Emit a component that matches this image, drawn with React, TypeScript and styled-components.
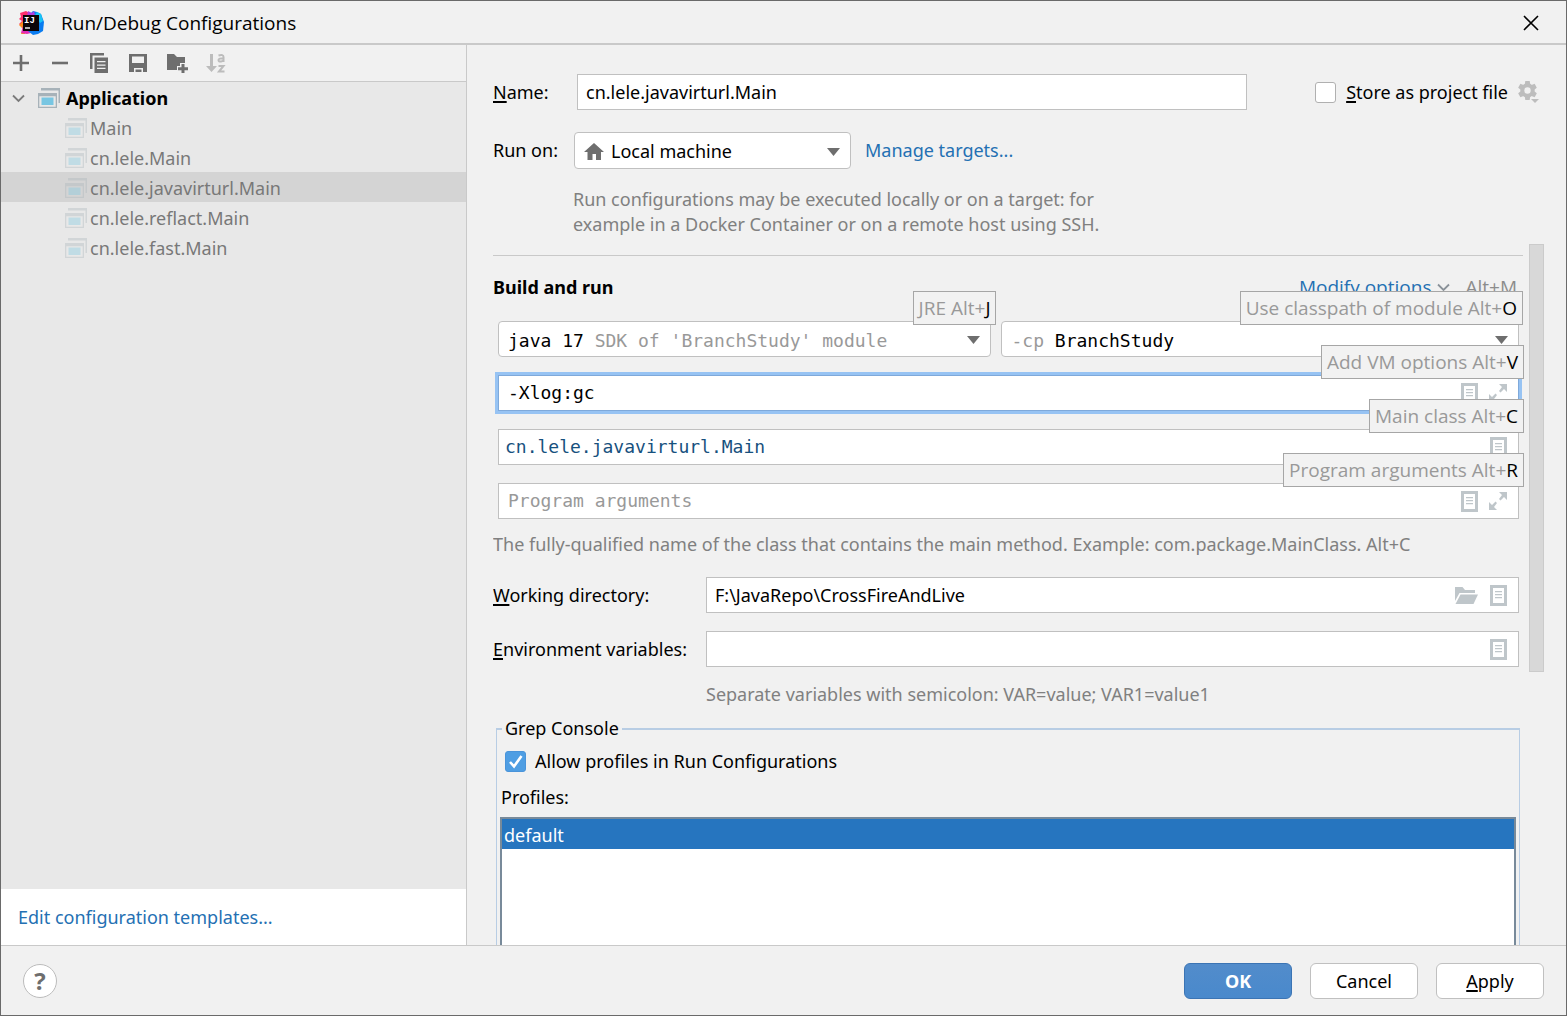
import React, { ReactNode } from 'react';
import styled, { createGlobalStyle } from 'styled-components';

const c = {
  panel: '#f1f1f1',
  tree: '#e8e8e8',
  selected: '#d4d4d4',
  line: '#c9c9c9',
  field: '#c0c0c0',
  link: '#2470b3',
  hint: '#808080',
  faint: '#999999',
  icon: '#6e6e6e',
  fieldIcon: '#bfc6ca',
};

const ui = '"Noto Sans", "Noto Sans CJK SC", sans-serif';
const mono = '"DejaVu Sans Mono", "Liberation Mono", monospace';

const GlobalStyle = createGlobalStyle`
  *, *::before, *::after { box-sizing: border-box; }
  body { margin: 0; }
  button, input, select { font: inherit; color: inherit; margin: 0; }
`;

/* ---------- window frame ---------- */

const Dialog = styled.div`
  display: flex;
  flex-direction: column;
  height: 100vh;
  border: 1px solid #6a6a6a;
  background: ${c.panel};
  color: #000;
  font: 18px/25px ${ui};
  overflow: hidden;
`;

const TitleBar = styled.header`
  display: flex;
  align-items: center;
  flex: none;
  height: 44px;
  padding: 2px 27px 0 18px;
  border-bottom: 2px solid ${c.line};
`;

const Title = styled.h1`
  flex: 1;
  margin: 0 0 0 17px;
  font: 400 19px/25px "Open Sans", ${ui};
`;

const IconButton = styled.button<{ $w?: number }>`
  display: flex;
  align-items: center;
  justify-content: center;
  flex: none;
  width: ${p => p.$w ?? 22}px;
  height: 24px;
  padding: 0;
  border: 0;
  background: none;
  color: ${c.icon};

  &:disabled { color: #bcbcbc; }
`;

const Body = styled.div`
  display: flex;
  flex: 1;
  min-height: 0;
`;

/* ---------- configurations sidebar ---------- */

const Sidebar = styled.aside`
  display: flex;
  flex-direction: column;
  flex: none;
  width: 466px;
  border-right: 1px solid ${c.line};
`;

const Toolbar = styled.div`
  display: flex;
  align-items: center;
  gap: 17px;
  height: 37px;
  padding: 0 9px;
  border-bottom: 1px solid ${c.line};
`;

const Tree = styled.ul`
  flex: 1;
  margin: 0;
  padding: 0;
  background: ${c.tree};
  list-style: none;
`;

const Group = styled.ul`
  margin: 0;
  padding: 0;
  list-style: none;
`;

const RootRow = styled.div`
  display: flex;
  align-items: center;
  height: 30px;
  padding: 2px 0 0 11px;
  font-weight: 700;

  svg:first-child { color: #7a7a7a; }
  svg + svg { margin: 0 6px 0 13px; }
`;

const ConfigRow = styled.li<{ $selected?: boolean }>`
  display: flex;
  align-items: center;
  gap: 3px;
  height: 30px;
  padding: 2px 0 0 64px;
  background: ${p => (p.$selected ? c.selected : 'transparent')};
  color: #787878;

  svg { opacity: 0.35; }
`;

const SidebarFooter = styled.div`
  display: flex;
  align-items: center;
  height: 56px;
  padding-left: 17px;
  background: #fff;
`;

const Link = styled.a`
  color: ${c.link};
  text-decoration: none;
`;

/* ---------- editor ---------- */

const Editor = styled.main`
  display: flex;
  flex-direction: column;
  flex: 1;
  min-width: 0;
  padding: 29px 0 0 26px;
`;

const General = styled.div`
  display: flex;
  flex-direction: column;
  gap: 22px;
  padding-right: 26px;
`;

const Row = styled.div`
  display: flex;
  align-items: center;
`;

const FieldLabel = styled.label<{ $w: number }>`
  flex: none;
  width: ${p => p.$w}px;
`;

const Mnemonic = styled.span`
  text-decoration: underline;
  text-decoration-thickness: 2px;
  text-underline-offset: 2px;
`;

const Field = styled.div<{ $focused?: boolean; $pad?: number }>`
  position: relative;
  display: flex;
  align-items: center;
  flex: 1;
  min-width: 0;
  gap: 12px;
  height: 36px;
  padding: 0 11px 0 ${p => p.$pad ?? 8}px;
  border: 1px solid ${p => (p.$focused ? '#7fa9da' : c.field)};
  box-shadow: ${p => (p.$focused ? '0 0 0 3px #97c3f3' : 'none')};
  background: #fff;
  color: ${c.fieldIcon};
`;

const TextInput = styled.input<{ $mono?: boolean; $color?: string }>`
  flex: 1;
  min-width: 0;
  height: 100%;
  padding: 0 0 1px;
  border: 0;
  outline: 0;
  background: none;
  color: ${p => p.$color ?? '#000'};
  font-family: ${p => (p.$mono ? mono : 'inherit')};

  &::placeholder { color: ${c.faint}; opacity: 1; }
`;

const Combo = styled.div<{ $mono?: boolean }>`
  position: relative;
  display: flex;
  align-items: center;
  height: ${p => (p.$mono ? 36 : 37)}px;
  padding: 2px 10px 0 9px;
  border: 1px solid ${c.field};
  border-radius: 4px;
  background: #fff;
  color: ${c.icon};
  font-family: ${p => (p.$mono ? mono : 'inherit')};
`;

const TargetCombo = styled(Combo)`
  width: 277px;
  gap: 7px;
`;

const Select = styled.select<{ $chars?: number }>`
  flex: ${p => (p.$chars ? 'none' : 1)};
  width: ${p => (p.$chars ? `${p.$chars}ch` : 'auto')};
  min-width: 0;
  height: 100%;
  padding: 0;
  border: 0;
  outline: 0;
  background: none;
  color: #000;
  appearance: none;
`;

const Dim = styled.span<{ $grow?: boolean }>`
  flex: ${p => (p.$grow ? 1 : 'none')};
  color: ${c.faint};
  white-space: pre;
`;

const StoreOption = styled.div`
  display: flex;
  align-items: center;
  gap: 10px;
  margin-left: 68px;
`;

const Check = styled.input`
  flex: none;
  width: 21px;
  height: 21px;
  border: 1px solid #b0b0b0;
  border-radius: 3px;
  background: #fff;
  appearance: none;

  &:checked {
    border-color: #4a94da;
    background: #4f9ee3 url("data:image/svg+xml,%3Csvg xmlns='http://www.w3.org/2000/svg' viewBox='0 0 19 19'%3E%3Cpath d='M4 10l4 4.4L15.5 4' fill='none' stroke='white' stroke-width='2.6'/%3E%3C/svg%3E") center / 19px 19px no-repeat;
  }
`;

const ManageLink = styled(Link)`
  margin-left: 14px;
`;

const TargetHint = styled.p`
  max-width: 560px;
  margin: 18px 0 7px 80px;
  color: ${c.hint};
`;

const ScrollArea = styled.div`
  display: flex;
  flex: 1;
  min-height: 0;
  overflow: hidden;
`;

const Settings = styled.div`
  flex: 1;
  min-width: 0;
  padding-top: 11px;
`;

const ScrollTrack = styled.div`
  flex: none;
  width: 43px;
  padding-left: 6px;
`;

const ScrollThumb = styled.div`
  width: 15px;
  height: 61%;
  border: 1px solid #cbcbcb;
  background: #d8d8d8;
`;

const SectionHead = styled.div`
  display: flex;
  align-items: center;
  padding: 19px 6px 0 0;
  border-top: 1px solid ${c.line};
`;

const SectionTitle = styled.h2`
  flex: 1;
  margin: 0;
  font: inherit;
  font-weight: 700;
`;

const MenuButton = styled.button`
  display: flex;
  align-items: center;
  gap: 6px;
  padding: 0;
  border: 0;
  background: none;
  color: ${c.link};
  font: 19px/25px "Open Sans", ${ui};

  svg { color: #8a9299; }
`;

const Shortcut = styled.span`
  margin-left: 15px;
  color: #8c8c8c;
  font: 19px/25px "Open Sans", ${ui};
`;

const Commands = styled.div`
  display: grid;
  gap: 18px;
  margin: 21px 4px 0 5px;
`;

const ComboPair = styled.div`
  display: grid;
  grid-template-columns: 493fr 517fr;
  gap: 10px;
`;

const Tip = styled.span<{ $out: number }>`
  position: absolute;
  z-index: 1;
  top: -31px;
  right: -${p => p.$out}px;
  padding: 4px 5px 3px 5px;
  border: 1px solid #a6a6a6;
  background: #f2f2f2;
  color: ${c.faint};
  font: 19px/25px "Open Sans", ${ui};
  white-space: nowrap;

  b { color: #000; font-weight: 400; }
`;

const Hint = styled.p<{ $top: number; $left?: number }>`
  margin: ${p => p.$top}px 0 0 ${p => p.$left ?? 0}px;
  color: ${c.hint};
`;

const Environment = styled.div`
  display: grid;
  gap: 18px;
  margin: 20px 4px 0 0;
`;

const GrepConsole = styled.fieldset`
  min-width: 0;
  margin: 9px 3px 0;
  padding: 8px 3px 0;
  border: 1px solid #b8cde4;
  border-top-width: 2px;
`;

const Legend = styled.legend`
  margin-left: 2px;
  padding: 0 3px;
`;

const ProfileOption = styled.div`
  display: flex;
  align-items: center;
  gap: 9px;
  padding-left: 5px;
`;

const ProfilesLabel = styled.div`
  margin: 11px 0 7px 1px;
`;

const ProfileList = styled.ul`
  height: 240px;
  margin: 0;
  padding: 0;
  border: 2px solid #788a9a;
  background: #fff;
  list-style: none;
`;

const Profile = styled.li`
  height: 30px;
  padding: 4px 2px 0;
  background: #2675bf;
  color: #fff;
`;

/* ---------- footer ---------- */

const Footer = styled.footer`
  display: flex;
  align-items: center;
  gap: 18px;
  flex: none;
  height: 70px;
  padding: 0 22px;
  border-top: 1px solid ${c.line};
`;

const HelpButton = styled.button`
  width: 34px;
  height: 34px;
  margin-right: auto;
  padding: 0;
  border: 1px solid #bcbcbc;
  border-radius: 50%;
  background: #fff;
  color: ${c.icon};
  font: 700 24px/30px "Open Sans", ${ui};
`;

const PushButton = styled.button<{ $primary?: boolean }>`
  width: 108px;
  height: 36px;
  padding: 2px 0 0;
  border: 1px solid ${p => (p.$primary ? '#3b74b4' : c.field)};
  border-radius: 6px;
  background: ${p => (p.$primary ? 'linear-gradient(#528ccb, #4989cc)' : '#fff')};
  color: ${p => (p.$primary ? '#fff' : '#000')};
  font-weight: ${p => (p.$primary ? 700 : 400)};
`;

/* ---------- icons ---------- */

const Logo = () => (
  <svg width="25" height="24" viewBox="0 0 25 24" aria-hidden="true">
    <path d="M1 2l6-2 5 3-2 10-6 3-4-3 3-3-3-2 2-2z" fill="#fe2e6c" />
    <path d="M0 14l5-5 3 6-2 8H2l2-5z" fill="#fc8a1c" />
    <path d="M4 15l4 1 4 6-4 1-6-1z" fill="#e32bb6" />
    <path d="M11 3l3-3 4 1 4 2 3 8-1 9-5 3-5 1-5-4z" fill="#0a7cf0" />
    <path d="M18 1l4 2 2 7-3 2-5-8z" fill="#18c4f4" />
    <path d="M9 0l4 2 2-2 1 5H8z" fill="#b23ce0" />
    <rect x="4" y="4" width="16" height="16" fill="#0b0508" />
    <text x="5" y="12" fill="#fff" fontFamily="Liberation Mono, monospace" fontSize="9" fontWeight="700">IJ</text>
    <path d="M6 17h5" stroke="#fff" strokeWidth="1.4" />
  </svg>
);

const CloseIcon = () => (
  <svg width="16" height="16" viewBox="0 0 16 16" fill="none" stroke="#000" strokeWidth="1.6">
    <path d="M1 1l14 14M15 1L1 15" />
  </svg>
);

const Stroke = ({ d }: { d: string }) => (
  <svg width="16" height="16" viewBox="0 0 16 16" fill="none" stroke="currentColor" strokeWidth="2.6">
    <path d={d} />
  </svg>
);

const CopyIcon = () => (
  <svg width="18" height="20" viewBox="0 0 18 20" fill="currentColor">
    <path d="M0 0h14v2.5H2.500V16H0z" />
    <path fillRule="evenodd" d="M4.500 4.500H18V20H4.500zm2.500 3.500v1.300h8.500V8zm0 3.400v1.300h8.500v-1.300zm0 3.400v1.300h8.500v-1.300z" />
  </svg>
);

const SaveIcon = () => (
  <svg width="18" height="18" viewBox="0 0 18 18" fill="currentColor">
    <path fillRule="evenodd" d="M0 0h18v18h-4v-4H5v4H0zM3 2.500V9h12V2.500z" />
    <path d="M6.500 15.500h6V18h-6z" />
  </svg>
);

const FolderPlusIcon = () => (
  <svg width="22" height="20" viewBox="0 0 22 20" fill="currentColor">
    <path d="M1 1h7l3 3h8v6h-5v3h-3v4H1z" />
    <path d="M15.500 11h3v3.200H22v3h-3.500V20h-3v-2.800H12v-3h3.500z" />
  </svg>
);

const SortIcon = () => (
  <svg width="20" height="21" viewBox="0 0 20 21" fill="currentColor">
    <path d="M4 1h3v12h4l-5.500 6L0 13h4z" />
    <path d="M12.500 2.500q5-1.500 5 1.500v5M17.500 5.500q-5-.5-5 1.500t2.500 1.500 2.500-1.500M12.500 13h5l-4.500 5.500h5.500" fill="none" stroke="currentColor" strokeWidth="2" />
  </svg>
);

const Chevron = ({ w }: { w: number }) => (
  <svg width={w} height="9" viewBox="0 0 13 9" fill="none" stroke="currentColor" strokeWidth="1.8">
    <path d="M1 1.500l5.500 5.500L12 1.500" />
  </svg>
);

const AppIcon = () => (
  <svg width="22" height="20" viewBox="0 0 22 20" fill="#a7b2b9">
    <path d="M3 0h19v15h-1.500V2.500H3z" />
    <path fillRule="evenodd" d="M0 5h19v15H0zm1.300 3.200v10.500h16.400V8.200z" />
    <path d="M3.500 9.500h12v7.500h-12z" fill="#78c6e2" />
  </svg>
);

const HomeIcon = () => (
  <svg width="20" height="17" viewBox="0 0 20 17" fill="currentColor">
    <path d="M10 0l10 9h-3v8h-5v-6H8.500v6H3.500V9H0z" />
  </svg>
);

const Arrow = () => (
  <svg width="13" height="8" viewBox="0 0 13 8" fill="currentColor">
    <path d="M0 0h13L6.500 8z" />
  </svg>
);

const GearIcon = () => (
  <svg width="22" height="22" viewBox="0 0 22 22" fill="#bdbdbd">
    <circle cx="9.500" cy="9.500" r="5.200" fill="none" stroke="#bdbdbd" strokeWidth="4" />
    {[0, 60, 120, 180, 240, 300].map(a => (
      <path key={a} d="M7.300 0h4.400l.6 4H6.700z" transform={`rotate(${a} 9.500 9.500)`} />
    ))}
    <path d="M13 18h8l-4 4z" />
  </svg>
);

const DocIcon = () => (
  <svg width="17" height="21" viewBox="0 0 17 21" fill="currentColor">
    <path fillRule="evenodd" d="M0 0h17v21H0zm3 3v15h11V3z" />
    <path d="M5 6h7v1.300H5zM5 9h7v1.300H5zM5 12h7v1.300H5z" />
  </svg>
);

const ExpandIcon = () => (
  <svg width="18" height="18" viewBox="0 0 18 18" fill="currentColor">
    <path d="M10 0h8v8l-3-3-3.500 3.500-1.500-1.500L13 3zM0 18v-8l3 3 3.500-3.500L8 11l-3 4 3 3z" />
  </svg>
);

const FolderIcon = () => (
  <svg width="23" height="17" viewBox="0 0 23 17" fill="currentColor">
    <path d="M0 0h7.500l2.500 3h10v3H4.500L0 14z" />
    <path d="M5.500 7.500H23L18.500 17H.5z" />
  </svg>
);

/* ---------- parts ---------- */

const configurations = ['Main', 'cn.lele.Main', 'cn.lele.javavirturl.Main', 'cn.lele.reflact.Main', 'cn.lele.fast.Main'];
const selectedConfiguration = 'cn.lele.javavirturl.Main';

const KeyTip = ({ text, letter, out = 6 }: { text: string; letter: string; out?: number }) => (
  <Tip $out={out}>{text} Alt+<b>{letter}</b></Tip>
);

const FieldButton = ({ label, w = 18, children }: { label: string; w?: number; children: ReactNode }) => (
  <IconButton type="button" aria-label={label} $w={w}>{children}</IconButton>
);

const FieldIcons = styled.div`
  display: flex;
  gap: 11px;

  button { color: ${c.fieldIcon}; }
`;

export default function App() {
  return (
    <Dialog>
      <GlobalStyle />
      <TitleBar>
        <Logo />
        <Title>Run/Debug Configurations</Title>
        <IconButton type="button" aria-label="Close" $w={16}><CloseIcon /></IconButton>
      </TitleBar>

      <Body>
        <Sidebar>
          <Toolbar>
            <IconButton type="button" aria-label="Add"><Stroke d="M8 0v16M0 8h16" /></IconButton>
            <IconButton type="button" aria-label="Remove"><Stroke d="M0 8h16" /></IconButton>
            <IconButton type="button" aria-label="Copy"><CopyIcon /></IconButton>
            <IconButton type="button" aria-label="Save"><SaveIcon /></IconButton>
            <IconButton type="button" aria-label="New folder"><FolderPlusIcon /></IconButton>
            <IconButton type="button" aria-label="Sort" disabled><SortIcon /></IconButton>
          </Toolbar>
          <Tree>
            <li>
              <RootRow><Chevron w={13} /><AppIcon />Application</RootRow>
              <Group>
                {configurations.map(name => (
                  <ConfigRow key={name} $selected={name === selectedConfiguration}>
                    <AppIcon />{name}
                  </ConfigRow>
                ))}
              </Group>
            </li>
          </Tree>
          <SidebarFooter><Link href="#templates">Edit configuration templates...</Link></SidebarFooter>
        </Sidebar>

        <Editor>
          <General>
            <Row>
              <FieldLabel htmlFor="name" $w={84}><Mnemonic>N</Mnemonic>ame:</FieldLabel>
              <Field><TextInput id="name" defaultValue="cn.lele.javavirturl.Main" /></Field>
              <StoreOption>
                <Check type="checkbox" id="store" />
                <label htmlFor="store"><Mnemonic>S</Mnemonic>tore as project file</label>
                <IconButton type="button" aria-label="Storage settings"><GearIcon /></IconButton>
              </StoreOption>
            </Row>
            <Row>
              <FieldLabel htmlFor="target" $w={81}>Run on:</FieldLabel>
              <TargetCombo>
                <HomeIcon />
                <Select id="target"><option>Local machine</option></Select>
                <Arrow />
              </TargetCombo>
              <ManageLink href="#targets">Manage targets...</ManageLink>
            </Row>
          </General>
          <TargetHint>
            Run configurations may be executed locally or on a target: for example in a Docker Container or on a remote host using SSH.
          </TargetHint>

          <ScrollArea>
            <Settings>
              <SectionHead>
                <SectionTitle>Build and run</SectionTitle>
                <MenuButton type="button">Modify options <Chevron w={13} /></MenuButton>
                <Shortcut>Alt+M</Shortcut>
              </SectionHead>

              <Commands>
                <ComboPair>
                  <Combo $mono>
                    <Select $chars={8} aria-label="JRE"><option>java 17</option></Select>
                    <Dim $grow>SDK of 'BranchStudy' module</Dim>
                    <Arrow />
                    <KeyTip text="JRE" letter="J" />
                  </Combo>
                  <Combo $mono>
                    <Dim>{'-cp '}</Dim>
                    <Select aria-label="Classpath of module"><option>BranchStudy</option></Select>
                    <Arrow />
                    <KeyTip text="Use classpath of module" letter="O" out={5} />
                  </Combo>
                </ComboPair>
                <Field $focused $pad={9}>
                  <TextInput $mono aria-label="VM options" defaultValue="-Xlog:gc" />
                  <FieldIcons>
                    <FieldButton label="Insert macro"><DocIcon /></FieldButton>
                    <FieldButton label="Expand"><ExpandIcon /></FieldButton>
                  </FieldIcons>
                  <KeyTip text="Add VM options" letter="V" />
                </Field>
                <Field $pad={6}>
                  <TextInput $mono $color="#17517e" aria-label="Main class" defaultValue="cn.lele.javavirturl.Main" />
                  <FieldIcons><FieldButton label="Browse classes"><DocIcon /></FieldButton></FieldIcons>
                  <KeyTip text="Main class" letter="C" />
                </Field>
                <Field $pad={9}>
                  <TextInput $mono aria-label="Program arguments" placeholder="Program arguments" />
                  <FieldIcons>
                    <FieldButton label="Insert macro"><DocIcon /></FieldButton>
                    <FieldButton label="Expand"><ExpandIcon /></FieldButton>
                  </FieldIcons>
                  <KeyTip text="Program arguments" letter="R" />
                </Field>
              </Commands>
              <Hint $top={13}>
                The fully-qualified name of the class that contains the main method. Example: com.package.MainClass. Alt+C
              </Hint>

              <Environment>
                <Row>
                  <FieldLabel htmlFor="directory" $w={213}><Mnemonic>W</Mnemonic>orking directory:</FieldLabel>
                  <Field>
                    <TextInput id="directory" defaultValue="F:\JavaRepo\CrossFireAndLive" />
                    <FieldIcons>
                      <FieldButton label="Browse" w={23}><FolderIcon /></FieldButton>
                      <FieldButton label="Insert macro"><DocIcon /></FieldButton>
                    </FieldIcons>
                  </Field>
                </Row>
                <Row>
                  <FieldLabel htmlFor="variables" $w={213}><Mnemonic>E</Mnemonic>nvironment variables:</FieldLabel>
                  <Field>
                    <TextInput id="variables" />
                    <FieldIcons><FieldButton label="Edit variables"><DocIcon /></FieldButton></FieldIcons>
                  </Field>
                </Row>
              </Environment>
              <Hint $top={15} $left={213}>Separate variables with semicolon: VAR=value; VAR1=value1</Hint>

              <GrepConsole>
                <Legend>Grep Console</Legend>
                <ProfileOption>
                  <Check type="checkbox" id="profiles" defaultChecked />
                  <label htmlFor="profiles">Allow profiles in Run Configurations</label>
                </ProfileOption>
                <ProfilesLabel>Profiles:</ProfilesLabel>
                <ProfileList><Profile>default</Profile></ProfileList>
              </GrepConsole>
            </Settings>
            <ScrollTrack><ScrollThumb /></ScrollTrack>
          </ScrollArea>
        </Editor>
      </Body>

      <Footer>
        <HelpButton type="button" aria-label="Help">?</HelpButton>
        <PushButton type="button" $primary>OK</PushButton>
        <PushButton type="button">Cancel</PushButton>
        <PushButton type="button"><Mnemonic>A</Mnemonic>pply</PushButton>
      </Footer>
    </Dialog>
  );
}
